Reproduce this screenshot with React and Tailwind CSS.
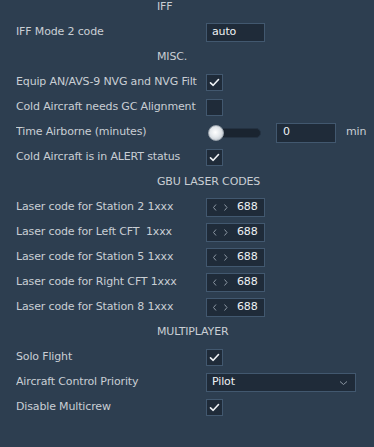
import React from "react";

const font = { fontFamily: '"DejaVu Sans", sans-serif' };

function Header({ children }) {
  return (
    <div className="h-[25px] flex items-center pl-[157px] text-[#c9ced4]">{children}</div>
  );
}

function Row({ label, children }) {
  return (
    <div className="h-[25px] flex items-center">
      <div className="w-[181px] ml-[16px] overflow-hidden whitespace-pre text-[#c9ced4]">{label}</div>
      <div className="ml-[9px] flex items-center">{children}</div>
    </div>
  );
}

function Check({ checked }) {
  return (
    <div className="w-[17px] h-[17px] border border-[#42586f] bg-[#1f2b39] flex items-center justify-center">
      {checked && (
        <svg width="11" height="9" viewBox="0 0 11 9">
          <path d="M1.5 4.8 L4.2 7.3 L9.5 1.5" fill="none" stroke="#eef1f4" strokeWidth="1.6" strokeLinecap="round" strokeLinejoin="round" />
        </svg>
      )}
    </div>
  );
}

function TextBox({ value, w = "w-[59px]" }) {
  return (
    <div className={`${w} h-[19px] border border-[#42586f] bg-[#1f2b39] flex items-center pl-[5px] text-[#eef1f4]`}>{value}</div>
  );
}

function Spin() {
  return (
    <div className="w-[59px] h-[19px] border border-[#42586f] bg-[#1f2b39] flex items-center text-[#eef1f4]">
      <svg width="30" height="19" viewBox="0 0 30 19" className="shrink-0">
        <path d="M9 6.5 L6.5 9.5 L9 12.5" fill="none" stroke="#8c97a3" strokeWidth="1" />
        <path d="M17.5 6.5 L20 9.5 L17.5 12.5" fill="none" stroke="#8c97a3" strokeWidth="1" />
      </svg>
      <span>688</span>
    </div>
  );
}

export default function App() {
  return (
    <div className="w-[374px] h-[447px] bg-[#2d3e50] overflow-hidden text-[11px] tracking-[-0.15px]" style={font}>
      <div className="-mt-[5px]">
        <Header>IFF</Header>
        <Row label="IFF Mode 2 code">
          <TextBox value="auto" />
        </Row>
        <Header>MISC.</Header>
        <Row label="Equip AN/AVS-9 NVG and NVG Filter">
          <Check checked />
        </Row>
        <Row label="Cold Aircraft needs GC Alignment">
          <Check />
        </Row>
        <Row label="Time Airborne (minutes)">
          <div className="w-[70px] h-[16px] flex items-center relative">
            <div className="ml-[2px] w-[53px] h-[10px] rounded-full bg-[#1a2430] border border-[#243242]" />
            <div
              className="absolute left-[2px] top-0 w-[16px] h-[16px] rounded-full border border-[#9aa3ad]"
              style={{ background: "radial-gradient(circle at 45% 45%, #ffffff 0%, #e4e8ec 45%, #aeb6bf 100%)" }}
            />
          </div>
          <div className="w-[60px] h-[20px] border border-[#42586f] bg-[#1f2b39] flex items-center pl-[6px] text-[#eef1f4]">0</div>
          <span className="ml-[10px] text-[#c9ced4]">min</span>
        </Row>
        <Row label="Cold Aircraft is in ALERT status">
          <Check checked />
        </Row>
        <Header>GBU LASER CODES</Header>
        <Row label="Laser code for Station 2 1xxx">
          <Spin />
        </Row>
        <Row label="Laser code for Left CFT  1xxx">
          <Spin />
        </Row>
        <Row label="Laser code for Station 5 1xxx">
          <Spin />
        </Row>
        <Row label="Laser code for Right CFT 1xxx">
          <Spin />
        </Row>
        <Row label="Laser code for Station 8 1xxx">
          <Spin />
        </Row>
        <Header>MULTIPLAYER</Header>
        <Row label="Solo Flight">
          <Check checked />
        </Row>
        <Row label="Aircraft Control Priority">
          <div className="w-[150px] h-[19px] border border-[#42586f] bg-[#1f2b39] flex items-center pl-[5px] pr-[7px] text-[#eef1f4]">
            <span className="flex-1">Pilot</span>
            <svg width="9" height="6" viewBox="0 0 9 6">
              <path d="M1 1.5 L4.5 4.5 L8 1.5" fill="none" stroke="#8c97a3" strokeWidth="1" />
            </svg>
          </div>
        </Row>
        <Row label="Disable Multicrew">
          <Check checked />
        </Row>
      </div>
    </div>
  );
}
